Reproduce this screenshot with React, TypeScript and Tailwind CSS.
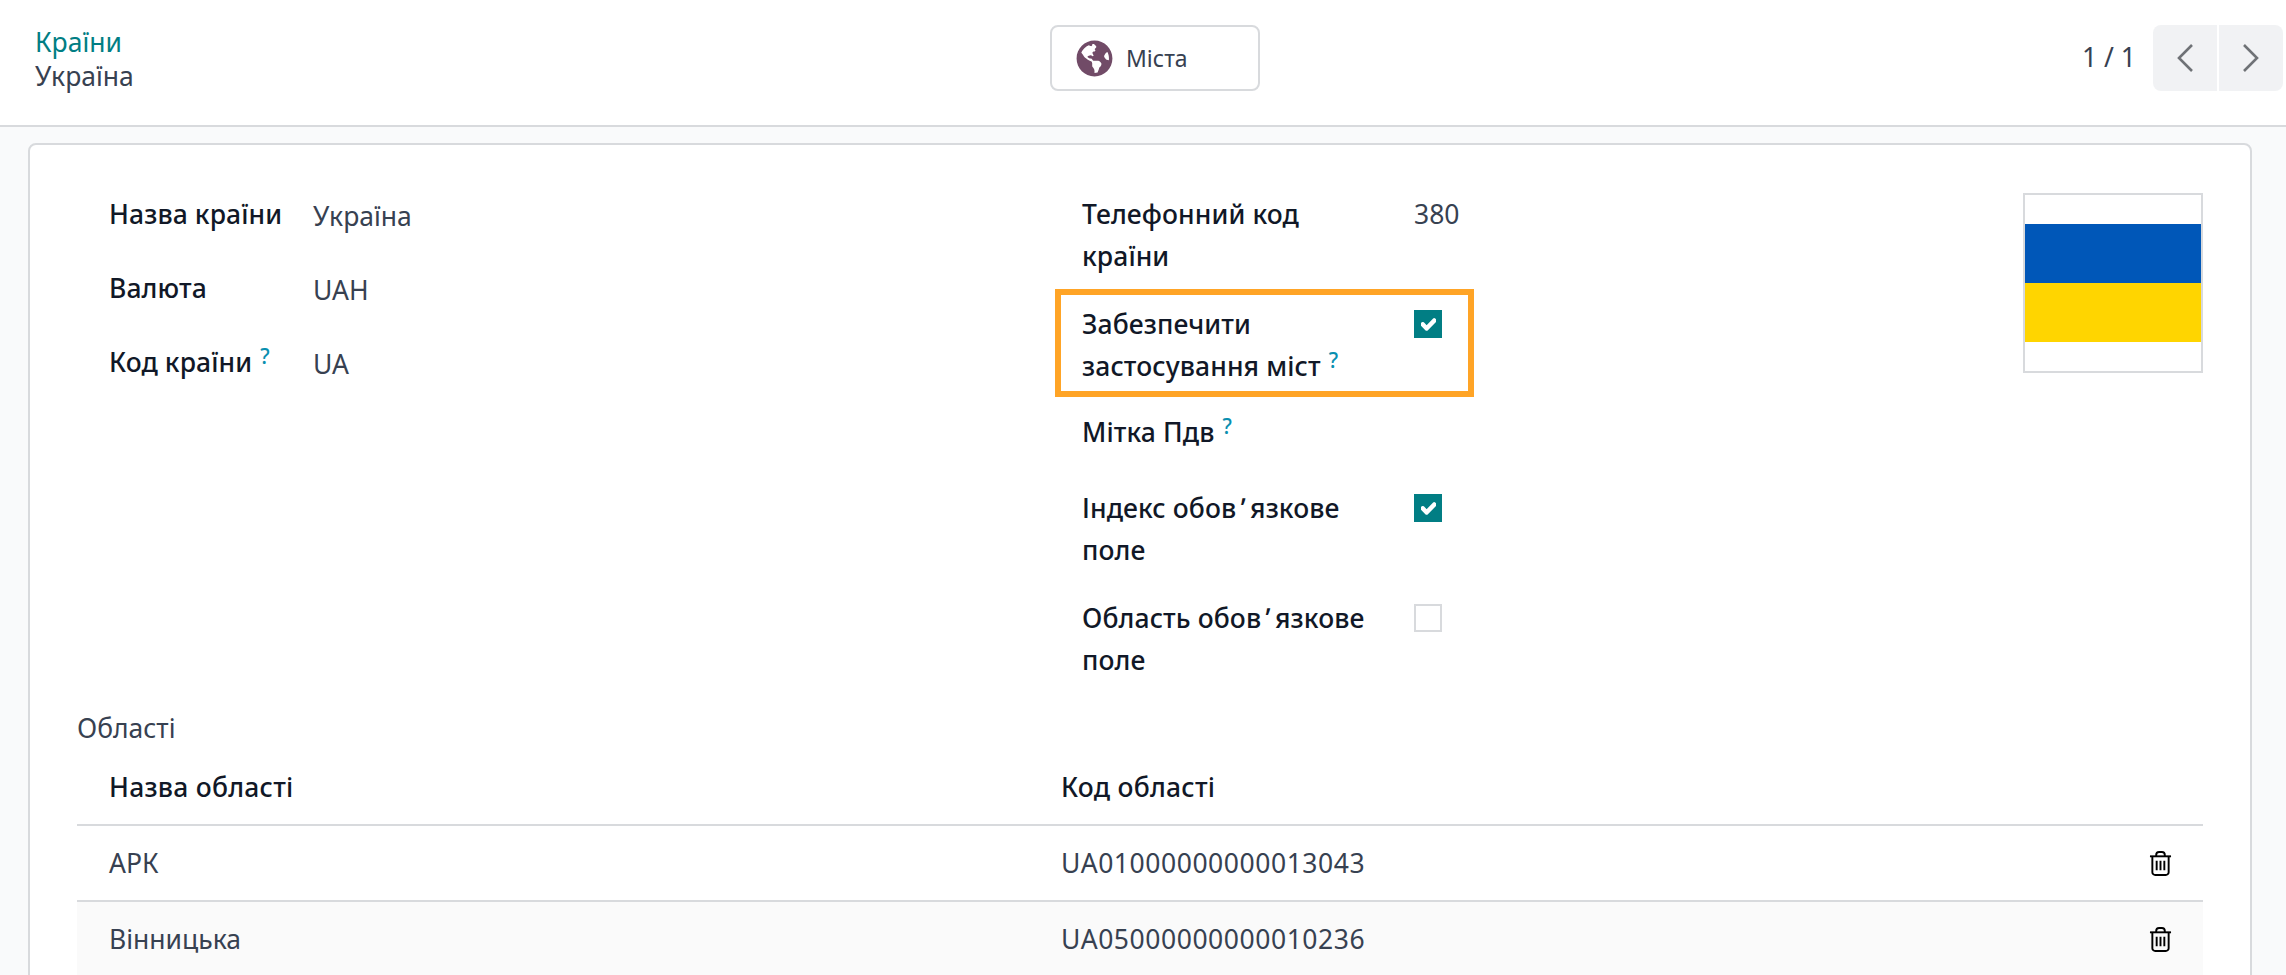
import { FaCheck, FaGlobeAmericas } from "react-icons/fa";

const font = "font-['Noto_Sans','Open_Sans',sans-serif]";

const Help = () => <sup className="ml-[8px] text-[21px] leading-none text-[#0a8fb0] relative -top-[8px]">?</sup>;

const Check = ({ checked }: { checked: boolean }) => (
	checked
		? <div className="w-[28px] h-[28px] bg-[#017e84] flex items-center justify-center text-white"><FaCheck size={15} stroke="currentColor" strokeWidth={50} /></div>
		: <div className="w-[28px] h-[28px] border-2 border-[#d8dadd] bg-white" />
);

const TrashIcon = () => (
	<svg width="23" height="25" viewBox="0 0 24 26" fill="none" stroke="#000" strokeWidth="2">
		<path d="M1 5.5h22" />
		<path d="M7.5 5.5V4a3 3 0 0 1 3-3h3a3 3 0 0 1 3 3v1.5" />
		<path d="M3.5 5.5V22a3 3 0 0 0 3 3h11a3 3 0 0 0 3-3V5.5" />
		<path d="M8 10v10M12 10v10M16 10v10" />
	</svg>
);

const LeftField = ({ label, value, help }: { label: string, value: string, help?: boolean }) => (
	<div className="flex h-[74px]">
		<div className="w-[204px] text-[#111827] font-medium tracking-[0.1px]">{label}{help && <Help />}</div>
		<div className="text-[#374151] pt-[2px]">{value}</div>
	</div>
);

const RightField = ({ label, help, height, children, text }: { label: string, help?: boolean, height: string, children?: React.ReactNode, text?: boolean }) => (
	<div className={`flex ${height}`}>
		<div className="w-[332px] pr-[40px] text-[#111827] font-medium tracking-[0.1px]">{label}{help && <Help />}</div>
		<div className={`text-[#374151] ${text ? "" : "pt-[7px]"}`}>{children}</div>
	</div>
);

const Row = ({ name, code, striped }: { name: string, code: string, striped?: boolean }) => (
	<div className={`flex items-center h-[76px] border-t-2 border-[#d8dadd] text-[#374151] ${striped ? "bg-[#fafafa]" : "bg-white"}`}>
		<div className="w-[984px] pl-[32px]">{name}</div>
		<div className="flex-1 tracking-[0.55px]">{code}</div>
		<div className="pr-[31px] flex items-center"><TrashIcon /></div>
	</div>
);

export default function App() {
	return (
		<div className={`${font} h-[975px] overflow-hidden bg-[#f9fafb] text-[26.5px] leading-[42px]`}>
			<header className="relative flex items-center justify-between h-[127px] bg-white border-b-2 border-[#d8dadd] pl-[35px] pr-[3px] pb-[10px]">
				<div className="leading-[34px] mt-[2px]">
					<div className="text-[#017e84]">Країни</div>
					<div className="text-[#374151]">Україна</div>
				</div>
				<button className="absolute left-[1050px] top-[25px] flex items-center gap-[13px] w-[210px] h-[66px] pl-[24px] border-2 border-[#d8dadd] rounded-[8px] bg-white text-[#374151] text-[23px]">
					<FaGlobeAmericas size={37} color="#714b67" />
					<span>Міста</span>
				</button>
				<div className="flex items-center gap-[17px] text-[#374151]">
					<span className="-mt-[1px]">1 / 1</span>
					<div className="flex gap-[2px]">
						<div className="w-[64px] h-[66px] bg-[#f1f2f4] rounded-l-[8px] flex items-center justify-center">
							<svg width="18" height="30" viewBox="0 0 18 30" fill="none" stroke="#6f7276" strokeWidth="2.6"><path d="M16 2 3 15l13 13" /></svg>
						</div>
						<div className="w-[64px] h-[66px] bg-[#f1f2f4] rounded-r-[8px] flex items-center justify-center">
							<svg width="18" height="30" viewBox="0 0 18 30" fill="none" stroke="#6f7276" strokeWidth="2.6"><path d="M2 2l13 13L2 28" /></svg>
						</div>
					</div>
				</div>
			</header>
			<main className="ml-[28px] mr-[34px] mt-[16px] bg-white border-2 border-[#d8dadd] rounded-t-[8px] pl-[47px] pr-[47px] pt-[48px] h-[900px]">
				<div className="flex">
					<div className="w-[1005px] pl-[32px]">
						<LeftField label="Назва країни" value="Україна" />
						<LeftField label="Валюта" value="UAH" />
						<LeftField label="Код країни" value="UA" help />
					</div>
					<div className="flex-1">
						<RightField label="Телефонний код країни" height="h-[110px]" text>380</RightField>
						<div className="relative">
							<div className="absolute left-[-27px] top-[-14px] w-[419px] h-[108px] border-[6px] border-[#ffa426]" />
							<RightField label="Забезпечити застосування міст" help height="h-[108px]"><Check checked /></RightField>
						</div>
						<RightField label="Мітка Пдв" help height="h-[76px]" />
						<RightField label={"Індекс обов\u202Fʹ\u202Fязкове поле"} height="h-[110px]"><Check checked /></RightField>
						<RightField label={"Область обов\u202Fʹ\u202Fязкове поле"} height="h-[90px]"><Check checked={false} /></RightField>
					</div>
					<div className="w-[180px] h-[180px] border-2 border-[#d8dadd] flex flex-col justify-center shrink-0">
						<div className="h-[59px] bg-[#0057b8]" />
						<div className="h-[59px] bg-[#ffd500]" />
					</div>
				</div>
				<div className="text-[#374151] mt-[20px]">Області</div>
				<div className="flex items-center h-[75px] text-[#111827] font-medium tracking-[0.25px]">
					<div className="w-[984px] pl-[32px]">Назва області</div>
					<div>Код області</div>
				</div>
				<Row name="АРК" code="UA01000000000013043" />
				<Row name="Вінницька" code="UA05000000000010236" striped />
			</main>
		</div>
	);
}
